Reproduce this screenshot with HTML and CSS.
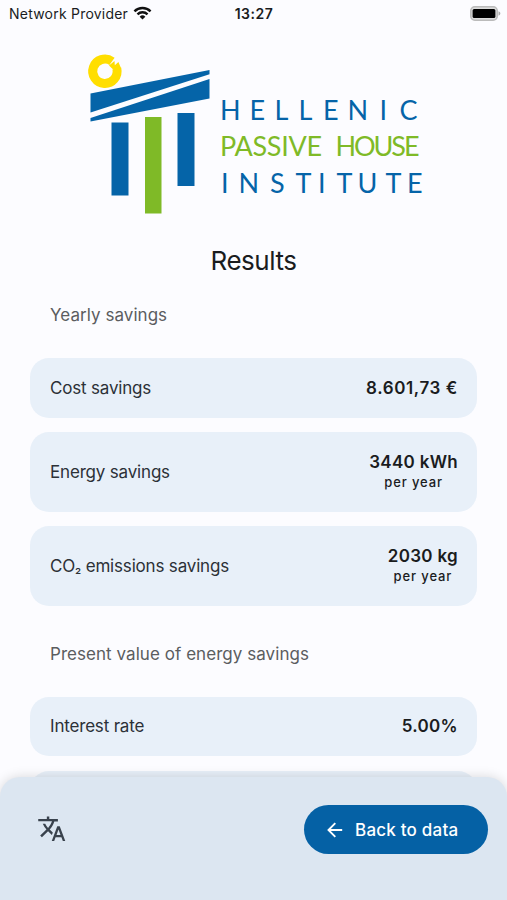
FILE: index.html
```html
<!DOCTYPE html>
<html lang="en">

<head>
    <meta charset="UTF-8">
    <meta name="viewport" content="width=device-width, initial-scale=1.0">
    <title>Results</title>
    <link rel="stylesheet" href="styles.css">
</head>

<body>
    <div class="screen">
        <!-- Status bar -->
        <header class="status-bar">
            <div class="carrier">
                <span>Network Provider</span>
                <svg class="wifi" viewBox="0 0 20 14" fill="none" stroke="#111" stroke-width="2.5">
                    <path d="M1.5 5.2a12.1 12.1 0 0 1 17 0" />
                    <path d="M4.7 8.4a7.5 7.5 0 0 1 10.6 0" />
                    <path d="M10 13.8L7 10.9a4.3 4.3 0 0 1 6 0z" fill="#111" stroke="none" />
                </svg>
            </div>
            <span class="time">13:27</span>
            <svg class="battery" viewBox="0 0 31 15">
                <rect x="0.8" y="0.8" width="26.4" height="13.4" rx="4" fill="#ddd" stroke="#bbb" stroke-width="1.6" />
                <rect x="2.6" y="2.9" width="22.8" height="9.2" rx="1.5" fill="#000" />
                <path d="M28.5 5.3v4.4c2.5-.8 2.5-3.6 0-4.4z" fill="#aaa" />
            </svg>
        </header>

        <!-- Logo -->
        <svg class="logo" viewBox="0 0 360 180">
            <path d="M37 16.3A12.2 12.2 0 1 0 41.8 23.5" fill="none" stroke="#ffde00" stroke-width="9" />
            <path d="M34 20.5L39.5 16l.3 4.2 3.6-3.2 2.8 6.5-7 2z" fill="#ffde00" />
            <g fill="#0564a8">
                <path d="M15.5 48.5L134.5 25v4.3L15.5 67.5z" />
                <path d="M15.5 73L134.5 34v19.5L15.5 76.5z" />
                <rect x="36.5" y="77.5" width="17" height="73" />
                <rect x="102.5" y="68" width="17" height="73" />
            </g>
            <rect x="70" y="72" width="16.5" height="96.5" fill="#7fba27" />
            <text class="logo-text" x="145 174.5 199.5 223.5 248 272.5 304.5 324.5" y="75">HELLENIC</text>
            <text class="logo-text green" x="145" y="110.5" textLength="102">PASSIVE</text>
            <text class="logo-text green" x="260.5" y="110.5" textLength="84">HOUSE</text>
            <text class="logo-text" x="146 163.5 195 220.5 243 261.5 282.5 310.5 332" y="148">INSTITUTE</text>
        </svg>

        <!-- Results -->
        <main class="results">
            <h1>Results</h1>

            <h2>Yearly savings</h2>
            <div class="card">
                <span class="label">Cost savings</span>
                <span class="value money">8.601,73 €</span>
            </div>
            <div class="card tall">
                <span class="label">Energy savings</span>
                <div class="amount">
                    <span class="value">3440 kWh</span>
                    <span class="unit">per year</span>
                </div>
            </div>
            <div class="card tall">
                <span class="label">CO<span class="sub">₂</span> emissions savings</span>
                <div class="amount">
                    <span class="value">2030 kg</span>
                    <span class="unit">per year</span>
                </div>
            </div>

            <h2 class="second">Present value of energy savings</h2>
            <div class="card">
                <span class="label">Interest rate</span>
                <span class="value">5.00%</span>
            </div>
            <div class="card"></div>
        </main>

        <!-- Bottom bar -->
        <footer class="bottom-bar">
            <svg class="translate" viewBox="0 0 24 24" fill="#39424d">
                <path d="M12.87 15.07l-2.54-2.51.03-.03c1.74-1.94 2.98-4.17 3.71-6.53H17V4h-7V2H8v2H1v1.99h11.17C11.5 7.92 10.44 9.75 9 11.35 8.07 10.32 7.3 9.19 6.69 8h-2c.73 1.63 1.73 3.17 2.98 4.56l-5.09 5.02L4 19l5-5 3.11 3.11.76-2.04zM18.5 10h-2L12 22h2l1.12-3h4.75L21 22h2l-4.5-12zm-2.62 7l1.62-4.33L19.12 17h-3.24z" />
            </svg>
            <button class="back-button">
                <svg viewBox="0 0 16 16" fill="none" stroke="#fff" stroke-width="1.9">
                    <path d="M15.2 8H2M8.3 1.2L1.5 8l6.8 6.8" />
                </svg>
                <span>Back to data</span>
            </button>
        </footer>
    </div>
</body>

</html>
```
FILE: styles.css
```css
body {
    margin: 0;
    font-family: Inter, "Liberation Sans", sans-serif;
    background-color: #fcfcff;
    color: #1a1c1e;
}

.screen {
    position: relative;
    height: 900px;
    overflow: hidden;
}

/* Status bar */
.status-bar {
    display: grid;
    grid-template-columns: 1fr auto 1fr;
    align-items: center;
    height: 27px;
    padding: 0 6px 0 9px;
    font-size: 14px;
}

.carrier {
    display: flex;
    align-items: center;
    gap: 5px;
    letter-spacing: 0.22px;
}

.wifi {
    width: 19px;
    height: 14px;
    margin-top: -2px;
}

.time {
    margin-left: -2px;
    font-weight: 600;
    letter-spacing: 0.5px;
}

.battery {
    width: 31px;
    height: 15px;
    justify-self: end;
}

/* Logo */
.logo {
    display: block;
    width: 360px;
    height: 180px;
    margin: 18px 0 0 75px;
}

.logo-text {
    font-family: Lato, sans-serif;
    font-size: 27px;
    fill: #0564a8;
}

.logo-text.green {
    fill: #7fba27;
}

/* Results */
.results {
    padding: 0 30px;
}

h1 {
    margin: 20px 0 0;
    font-size: 26px;
    font-weight: 400;
    line-height: 32px;
    text-align: center;
    letter-spacing: -0.5px;
}

h2 {
    margin: 26px 20px 31px;
    font-size: 17px;
    font-weight: 400;
    line-height: 24px;
    letter-spacing: 0.05px;
    color: #5b5d60;
}

h2.second {
    margin-top: 36px;
}

.card {
    display: flex;
    align-items: center;
    justify-content: space-between;
    box-sizing: border-box;
    height: 59.5px;
    margin-bottom: 14.5px;
    padding: 0 19px 0 20px;
    border-radius: 19px;
    background-color: #e8f0f9;
}

.card.tall {
    height: 79.5px;
}

.label {
    font-size: 17px;
    letter-spacing: -0.18px;
    color: #2c3137;
}

.sub {
    font-size: 14px;
}

.amount {
    display: flex;
    flex-direction: column;
    align-items: center;
}

.value {
    font-size: 17px;
    font-weight: 600;
    line-height: 22px;
    letter-spacing: 0.3px;
}

.value.money {
    letter-spacing: 0.6px;
}

.unit {
    font-size: 13px;
    font-weight: 500;
    line-height: 19px;
    letter-spacing: 0.9px;
}

/* Bottom bar */
.bottom-bar {
    position: absolute;
    left: 0;
    right: 0;
    bottom: 0;
    display: flex;
    align-items: flex-start;
    justify-content: space-between;
    box-sizing: border-box;
    height: 123px;
    padding: 28px 19px 0 37px;
    border-radius: 20px 20px 0 0;
    background-color: #dce6f1;
    box-shadow: 0 0 12px rgba(0, 0, 0, 0.15);
}

.translate {
    width: 29.5px;
    height: 29.5px;
    margin-top: 9px;
}

.back-button {
    display: flex;
    align-items: center;
    gap: 12px;
    width: 184px;
    height: 49px;
    padding: 0 0 0 23px;
    border: none;
    border-radius: 25px;
    background-color: #0561a5;
    color: #fff;
    font-family: inherit;
    font-size: 17px;
    font-weight: 500;
    letter-spacing: 0.22px;
    white-space: nowrap;
}

.back-button svg {
    width: 16px;
    height: 16px;
}
```
